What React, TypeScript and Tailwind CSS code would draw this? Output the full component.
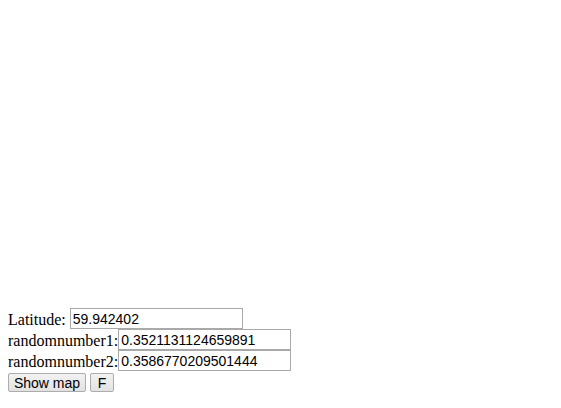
export default function App() {
  const inputCls =
    "inline-block align-middle w-[173px] h-[21px] border border-[#a9a9a9] px-[2px] py-[1px] bg-white text-[14px] leading-[17px] text-black outline-none [font-family:'Liberation_Sans',Arial,sans-serif]";
  const btnCls =
    "h-[19px] whitespace-nowrap text-center border border-[#acacac] rounded-[2px] bg-gradient-to-b from-[#f2f2f2] to-[#e2e2e2] text-[14px] leading-[16px] text-black px-0 [font-family:'Liberation_Sans',Arial,sans-serif]";

  return (
    <div className="p-2 bg-white min-h-[408px] text-black text-[16px] [font-family:'Liberation_Serif','Times_New_Roman',serif]">
      <div className="h-[300px]" />
      <div className="flex items-end h-[21px]">
        <span className="leading-[18px] mr-[4px]">Latitude:</span>
        <input className={inputCls} defaultValue="59.942402" />
      </div>
      <div className="flex items-end h-[21px]">
        <span className="leading-[18px]">randomnumber1:</span>
        <input className={inputCls} defaultValue="0.3521131124659891" />
      </div>
      <div className="flex items-end h-[21px]">
        <span className="leading-[18px]">randomnumber2:</span>
        <input className={inputCls} defaultValue="0.3586770209501444" />
      </div>
      <div className="flex gap-[4px] mt-[2px]">
        <button className={`${btnCls} w-[78px]`}>Show map</button>
        <button className={`${btnCls} w-[24px]`}>F</button>
      </div>
    </div>
  );
}
